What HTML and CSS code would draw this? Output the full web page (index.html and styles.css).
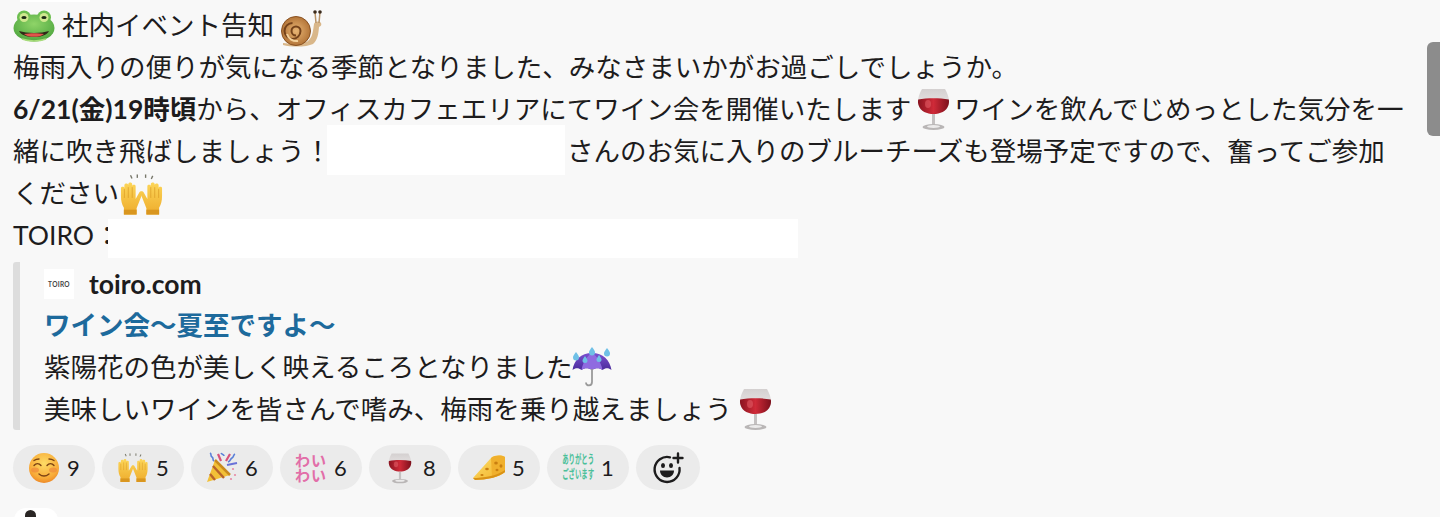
FILE: index.html
```html
<!DOCTYPE html>
<html lang="ja">
  <head>
    <meta charset="UTF-8" />
    <meta name="viewport" content="width=device-width, initial-scale=1.0" />
    <title>社内イベント告知</title>
    <link rel="stylesheet" href="styles.css">
  </head>
  <body>
    <svg class="defs" width="0" height="0" aria-hidden="true">
      <defs>
        <linearGradient id="wineRed" x1="0" y1="0" x2="1" y2="0">
          <stop offset="0" stop-color="#8a1420" />
          <stop offset="0.5" stop-color="#cf2a38" />
          <stop offset="1" stop-color="#7c101c" />
        </linearGradient>
        <linearGradient id="wineGlass" x1="0" y1="0" x2="0" y2="1">
          <stop offset="0" stop-color="#d4d0d0" />
          <stop offset="1" stop-color="#f1eeee" />
        </linearGradient>
        <linearGradient id="handYellow" x1="0" y1="0" x2="0" y2="1">
          <stop offset="0" stop-color="#fcd558" />
          <stop offset="1" stop-color="#eeac2c" />
        </linearGradient>
        <radialGradient id="faceYellow" cx="0.5" cy="0.35" r="0.7">
          <stop offset="0" stop-color="#fddc66" />
          <stop offset="0.7" stop-color="#f8ab38" />
          <stop offset="1" stop-color="#ea7f22" />
        </radialGradient>
        <radialGradient id="frogGreen" cx="0.5" cy="0.35" r="0.75">
          <stop offset="0" stop-color="#8fd468" />
          <stop offset="0.75" stop-color="#58ad45" />
          <stop offset="1" stop-color="#3b8f3a" />
        </radialGradient>
        <radialGradient id="shellBrown" cx="0.5" cy="0.5" r="0.6">
          <stop offset="0" stop-color="#e8b473" />
          <stop offset="1" stop-color="#a9692d" />
        </radialGradient>
        <linearGradient id="canopy" x1="0" y1="0" x2="0" y2="1">
          <stop offset="0" stop-color="#7b4fd0" />
          <stop offset="1" stop-color="#4b2c9c" />
        </linearGradient>
        <linearGradient id="cheeseTop" x1="0" y1="0" x2="1" y2="1">
          <stop offset="0" stop-color="#fde06a" />
          <stop offset="1" stop-color="#f2b12a" />
        </linearGradient>

        <symbol id="wine" viewBox="0 0 33 42">
          <path d="M5 1h23c3 5.500 5 11 3.500 16-2 6.500-8.500 9-15 9s-13-2.500-15-9C0 12 2 6.500 5 1z" fill="url(#wineGlass)" />
          <path d="M1.200 11.500c9-1.800 21-1.800 30.600 0 .4 2 .2 3.800-.3 5.500-2 6.500-8.500 9-15 9s-13-2.500-15-9c-.5-1.700-.7-3.500-.3-5.500z" fill="url(#wineRed)" />
          <ellipse cx="11" cy="16" rx="3" ry="4" fill="#e4606a" opacity=".55" />
          <rect x="15" y="26" width="3" height="11" fill="#c4c1c1" />
          <ellipse cx="16.500" cy="39" rx="11" ry="3" fill="#b9b6b6" />
          <ellipse cx="16.500" cy="38.500" rx="6.500" ry="1.500" fill="#ecebeb" />
        </symbol>

        <symbol id="hands" viewBox="0 0 46 42">
          <g fill="#77776a">
            <rect x="12" y="1" width="1.400" height="3.500" transform="rotate(-25 12 3)" />
            <rect x="18" y="0" width="1.400" height="3.500" />
            <rect x="26.500" y="0" width="1.400" height="3.500" />
            <rect x="33" y="1" width="1.400" height="3.500" transform="rotate(25 33 3)" />
          </g>
          <path d="M5 41V34C3 31 2 27 2 22V14c0-2 3.500-2 3.500 0v-3c0-2.400 4-2.400 4 0v-1c0-2.400 4-2.400 4 0v2c0-2 3.500-2 3.500 0v13l4-7c1-1.800 3.800-.5 3 1.500L18 34.500V41z" fill="url(#handYellow)" />
          <path d="M41 41V34c2-3 3-7 3-12v-8c0-2-3.500-2-3.500 0v-3c0-2.400-4-2.400-4 0v-1c0-2.400-4-2.400-4 0v2c0-2-3.500-2-3.500 0v13l-4-7c-1-1.800-3.800-.5-3 1.500L28 34.500V41z" fill="url(#handYellow)" />
          <path d="M5.500 15v9M9.500 13v11M13.500 13v11M40.500 15v9M36.500 13v11M32.500 13v11" stroke="#d99a25" stroke-width=".7" />
          <rect x="5" y="36" width="13" height="5" fill="#d9961f" />
          <rect x="28" y="36" width="13" height="5" fill="#d9961f" />
        </symbol>
      </defs>
    </svg>

    <div class="crop-top"></div>

    <div class="message">
      <div class="line">
        <svg class="emoji frog" viewBox="0 0 42 32" aria-hidden="true">
          <circle cx="11" cy="7.500" r="7" fill="#6dbe4f" />
          <circle cx="31" cy="7.500" r="7" fill="#6dbe4f" />
          <ellipse cx="21" cy="18" rx="20.500" ry="13.500" fill="url(#frogGreen)" />
          <circle cx="11" cy="7.500" r="4.500" fill="#cfe88f" />
          <circle cx="31" cy="7.500" r="4.500" fill="#cfe88f" />
          <ellipse cx="11" cy="7.500" rx="2.600" ry="1.600" fill="#1c2a16" />
          <ellipse cx="31" cy="7.500" rx="2.600" ry="1.600" fill="#1c2a16" />
          <path d="M6 21c8 2.500 22 2.500 30 0-2 4-8 6-15 6s-13-2-15-6z" fill="#2f2a18" />
          <path d="M11 24c6-1 14-1 20 0-2 2-6 2.800-10 2.800s-8-.8-10-2.800z" fill="#e0554a" />
          <path d="M9 29c7 2.500 17 2.500 24 0" fill="none" stroke="#a8dc7a" stroke-width="1.500" />
        </svg>
        <span class="title-text">社内イベント告知</span>
        <svg class="emoji snail" viewBox="0 0 42 38" aria-hidden="true">
          <path d="M2 34c9 1 21 1 25-2 5-4 5-11 6-17 .5-2.500 5-3.500 7-1 1 2-.5 3.500-2 4-.5 7-1.500 13-6 17-6 3-21 3.500-30 1z" fill="#d9b78a" />
          <circle cx="15" cy="22" r="14.500" fill="url(#shellBrown)" />
          <circle cx="15" cy="22" r="14.500" fill="none" stroke="#8a5222" stroke-width="1" />
          <path d="M15 26.500a4.500 4.500 0 1 1 4.500-4.500 8 8 0 1 1-8-8" fill="none" stroke="#74421a" stroke-width="2" />
          <path d="M6 25a10 10 0 0 0 11 7" fill="none" stroke="#f4d19b" stroke-width="2" />
          <path d="M35 14l-1-11M38 14l1-11" stroke="#b8946a" stroke-width="1.500" />
          <circle cx="34" cy="3" r="1.800" fill="#3a2a1c" />
          <circle cx="39" cy="3" r="1.800" fill="#3a2a1c" />
        </svg>
      </div>

      <div class="line">梅雨入りの便りが気になる季節となりました、みなさまいかがお過ごしでしょうか。</div>

      <div class="line">
        <strong>6/21(金)19時頃</strong>から、オフィスカフェエリアにてワイン会を開催いたします
        <svg class="emoji wine-big" aria-hidden="true"><use href="#wine" /></svg>
        ワインを飲んでじめっとした気分を一
      </div>

      <div class="line">
        緒に吹き飛ばしましょう！<span class="redact name-redact"></span>さんのお気に入りのブルーチーズも登場予定ですので、奮ってご参加
      </div>

      <div class="line">
        ください<svg class="emoji hands-big" aria-hidden="true"><use href="#hands" /></svg>
      </div>

      <div class="line">TOIRO：<span class="redact url-redact"></span></div>

      <div class="unfurl">
        <div class="unfurl-head">
          <div class="site-logo">TOIRO</div>
          <div class="site-name">toiro.com</div>
        </div>
        <div class="line unfurl-title">ワイン会～夏至ですよ～</div>
        <div class="line">
          紫陽花の色が美しく映えるころとなりました
          <svg class="emoji umbrella" viewBox="0 0 40 40" aria-hidden="true">
            <path d="M20 6C9 6 2 13 .5 23c3-2.500 6-2.500 9 0 3-2.500 7-2.500 10.500 0 3.500-2.500 7.500-2.500 10.500 0 3-2.500 6-2.500 9 0C38 13 31 6 20 6z" fill="url(#canopy)" />
            <path d="M20 6c-5 3-9 9-10.500 17 3-2.500 7-2.500 10.500 0 3.500-2.500 7.500-2.500 10.500 0C29 15 25 9 20 6z" fill="#8f6be0" />
            <path d="M20 22v13c0 4.500-6 4.500-6 .5" fill="none" stroke="#9a9a9a" stroke-width="1.800" />
            <g fill="#6fc0e6">
              <path d="M4 5c2 2.500 3 4 3 5.500a3 3 0 0 1-6 0C1 9 2 7.500 4 5z" />
              <path d="M20 0c2 2.500 3 4 3 5.500a3 3 0 0 1-6 0C17 4 18 2.500 20 0z" />
              <path d="M35 1c2 2.500 3 4 3 5.500a3 3 0 0 1-6 0C32 5 33 3.500 35 1z" />
              <path d="M13 9c1.500 2 2.500 3.500 2.500 4.500a2.500 2.500 0 0 1-5 0c0-1 1-2.500 2.500-4.500z" />
              <path d="M27 8c1.500 2 2.500 3.500 2.500 4.500a2.500 2.500 0 0 1-5 0c0-1 1-2.500 2.500-4.500z" />
            </g>
          </svg>
        </div>
        <div class="line">
          美味しいワインを皆さんで嗜み、梅雨を乗り越えましょう
          <svg class="emoji wine-big after-text" aria-hidden="true"><use href="#wine" /></svg>
        </div>
      </div>

      <div class="reactions">
        <div class="reaction">
          <svg class="react-icon" viewBox="0 0 32 32" aria-hidden="true">
            <circle cx="16" cy="16" r="15" fill="url(#faceYellow)" />
            <ellipse cx="7" cy="18" rx="4" ry="2.500" fill="#f08a3c" opacity=".7" />
            <ellipse cx="25" cy="18" rx="4" ry="2.500" fill="#f08a3c" opacity=".7" />
            <path d="M6 13.500c2-2.500 5-2.500 7 0M19 13.500c2-2.500 5-2.500 7 0M11 22c3 2.500 7 2.500 10 0M6 8.500c1.500-1 3-1.500 5-1.500M21 7c2 0 3.500.5 5 1.500" fill="none" stroke="#7c4313" stroke-width="1.400" stroke-linecap="round" />
          </svg>
          <span>9</span>
        </div>
        <div class="reaction">
          <svg class="react-icon" aria-hidden="true"><use href="#hands" /></svg>
          <span>5</span>
        </div>
        <div class="reaction">
          <svg class="react-icon" viewBox="0 0 32 32" aria-hidden="true">
            <path d="M1 30L9 8l15 15z" fill="#f2c037" />
            <path d="M4 22l5 6M7 14l11 12" stroke="#b8632a" stroke-width="2.400" />
            <path d="M9 8l15 15" stroke="#c98a1f" stroke-width="2.500" />
            <path d="M4 1c2 1 0 3 2 4s0 3 2 4M15 1c1 2 3 1 3 3M29 2c-2 1-1 3-3 4s-1 3-4 4" fill="none" stroke="#5a7fd8" stroke-width="1.600" />
            <path d="M12 2l3 7M24 2l-4 7" stroke="#d8517a" stroke-width="2.200" />
            <path d="M21 13l10-2" stroke="#6a72d8" stroke-width="1.800" />
            <g fill="#e88aa5">
              <circle cx="27" cy="17" r="1.100" />
              <circle cx="25" cy="27" r="1.100" />
              <circle cx="29" cy="23" r="1.100" />
            </g>
          </svg>
          <span>6</span>
        </div>
        <div class="reaction">
          <div class="text-emoji wai">わい<br />わい</div>
          <span>6</span>
        </div>
        <div class="reaction">
          <svg class="react-icon wine-small" aria-hidden="true"><use href="#wine" /></svg>
          <span>8</span>
        </div>
        <div class="reaction">
          <svg class="react-icon" viewBox="0 0 32 26" aria-hidden="true">
            <path d="M0 23L18 3c4-3 10-3 14-1v15c-6 5-19 8-30 8z" fill="url(#cheeseTop)" />
            <path d="M18 3c4-3 10-3 14-1v15c-3 2.500-7 4.500-13 6z" fill="#f0b02d" />
            <path d="M0 23c10 0 24-2 32-8v2c-6 5-19 8-30 8z" fill="#d99216" />
            <g fill="#c97f10">
              <ellipse cx="23" cy="8" rx="1.800" ry="1.500" />
              <ellipse cx="28" cy="11" rx="1.500" ry="1.800" />
              <ellipse cx="24" cy="15" rx="1.500" ry="1.300" />
              <ellipse cx="14" cy="14" rx="1.800" ry="1.300" />
              <ellipse cx="9" cy="20" rx="1.600" ry="1.100" />
            </g>
          </svg>
          <span>5</span>
        </div>
        <div class="reaction">
          <div class="text-emoji thanks">ありがとう<br />ございます</div>
          <span>1</span>
        </div>
        <div class="reaction add-reaction">
          <svg class="add-icon" viewBox="0 0 32 32" aria-hidden="true">
            <path d="M18 5.300A12.500 12.500 0 1 0 27.500 16" fill="none" stroke="#1d1c1d" stroke-width="2.400" stroke-linecap="round" />
            <ellipse cx="11" cy="13.500" rx="2" ry="2.500" fill="#1d1c1d" />
            <ellipse cx="19" cy="13.500" rx="2" ry="2.500" fill="#1d1c1d" />
            <path d="M8 18.500h14c0 4-3 7-7 7s-7-3-7-7z" fill="#1d1c1d" />
            <path d="M26 1.500v9M21.500 6h9" stroke="#1d1c1d" stroke-width="2.400" stroke-linecap="round" />
          </svg>
        </div>
      </div>

      <div class="next-avatar"><div class="next-hair"></div></div>
    </div>

    <div class="scroll-thumb"></div>
  </body>
</html>
```

FILE: styles.css
```css
:root {
  --page-bg: #f8f8f8;
  --text-dark: #1d1c1d;
  --pill-bg: #ebebeb;
}

body {
  margin: 0;
  height: 517px;
  overflow: hidden;
  position: relative;
  background-color: var(--page-bg);
  color: var(--text-dark);
  font-family: Lato, "Noto Sans CJK JP", sans-serif;
  font-size: 26.5px;
}

.defs {
  position: absolute;
}

.crop-top {
  width: 70px;
  height: 2px;
  margin-left: 20px;
  background-color: #fff;
}

.message {
  padding: 2px 0 0 13px;
}

.line {
  box-sizing: border-box;
  display: flex;
  align-items: center;
  height: 42px;
  padding-bottom: 4px;
  white-space: nowrap;
}

.line strong {
  font-weight: 700;
}

.emoji {
  flex: none;
}

.frog {
  width: 42px;
  height: 32px;
  margin: 6px 7px 0 0;
}

.snail {
  width: 42px;
  height: 38px;
  margin: 10px 0 0 7px;
}

.wine-big {
  width: 33px;
  height: 42px;
  margin: 4px 4px 0 6px;
}

.wine-big.after-text {
  margin-left: 7px;
}

.hands-big {
  width: 45px;
  height: 42px;
  margin-top: 8px;
}

.umbrella {
  width: 40px;
  height: 40px;
  margin-top: 4px;
}

.redact {
  display: block;
  flex: none;
  background-color: #fff;
}

.name-redact {
  width: 238px;
  height: 50px;
  margin: 2px 2px 0 -4px;
}

.url-redact {
  width: 690px;
  height: 39px;
  margin: 11px 0 0 -13px;
}

.unfurl {
  margin: 6px 0 0 0;
  padding: 7px 0 0 24px;
  border-left: 7px solid #dddddd;
  border-radius: 3px;
}

.unfurl-head {
  display: flex;
  align-items: center;
  gap: 15px;
  margin-bottom: 5px;
}

.site-logo {
  width: 30px;
  height: 30px;
  display: flex;
  align-items: center;
  justify-content: center;
  background-color: #fff;
  font-size: 6.500px;
  font-weight: 700;
  letter-spacing: 0.3px;
  color: #444;
}

.site-name {
  font-size: 26.500px;
  font-weight: 700;
  line-height: 30px;
}

.unfurl-title {
  font-weight: 700;
  color: #1d6a9c;
}

.reactions {
  display: flex;
  gap: 7px;
  margin: 15px 0 0 0;
}

.reaction {
  display: flex;
  align-items: center;
  justify-content: center;
  gap: 7px;
  width: 82px;
  height: 45px;
  border-radius: 23px;
  background-color: var(--pill-bg);
  font-size: 22px;
}

.react-icon {
  width: 32px;
  height: 32px;
  flex: none;
}

.wine-small {
  width: 24px;
  height: 32px;
  margin: 0 4px;
}

.text-emoji {
  width: 32px;
  flex: none;
  text-align: center;
  font-weight: 700;
}

.wai {
  color: #e26ea8;
  font-size: 15px;
  letter-spacing: 1px;
  line-height: 15px;
}

.thanks {
  color: #4cc09a;
  font-size: 6.400px;
  line-height: 8px;
  transform: scaleY(1.900);
}

.add-reaction {
  width: 64px;
}

.add-icon {
  width: 32px;
  height: 32px;
}

.next-avatar {
  width: 44px;
  height: 30px;
  margin: 18px 0 0 1px;
  padding-top: 2px;
  border-radius: 12px;
  background-color: #fff;
}

.next-hair {
  width: 11px;
  height: 30px;
  margin-left: 11px;
  border-radius: 6px;
  background-color: #2a2624;
}

.scroll-thumb {
  position: absolute;
  top: 42px;
  right: 0;
  width: 13px;
  height: 94px;
  border-radius: 6px 0 0 6px;
  background-color: #8c8c8c;
}
```
